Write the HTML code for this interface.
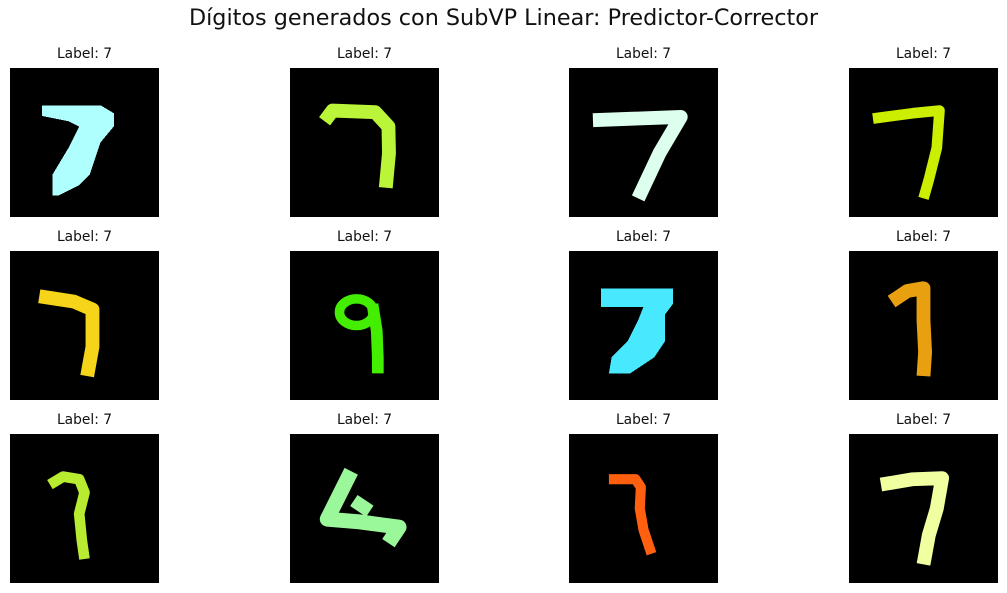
<!DOCTYPE html>
<html><head><meta charset="utf-8"><style>
html,body{margin:0;padding:0;background:#fff;}
body{width:1007px;height:593px;position:relative;overflow:hidden;font-family:"Liberation Sans","DejaVu Sans",sans-serif;}
.t{position:absolute;top:5px;left:0;width:1007px;text-align:center;font-size:22.3px;color:#111;font-family:"DejaVu Sans","Liberation Sans",sans-serif;}
.l{position:absolute;width:149px;text-align:center;font-size:13.8px;color:#111;font-family:"DejaVu Sans","Liberation Sans",sans-serif;}
svg{position:absolute;width:149px;height:149px;}
</style></head><body>
<div class="t">Dígitos generados con SubVP Linear: Predictor-Corrector</div>

<div class="l" style="left:10px;top:46px">Label: 7</div>
<div class="l" style="left:290px;top:46px">Label: 7</div>
<div class="l" style="left:569px;top:46px">Label: 7</div>
<div class="l" style="left:849px;top:46px">Label: 7</div>
<div class="l" style="left:10px;top:229px">Label: 7</div>
<div class="l" style="left:290px;top:229px">Label: 7</div>
<div class="l" style="left:569px;top:229px">Label: 7</div>
<div class="l" style="left:849px;top:229px">Label: 7</div>
<div class="l" style="left:10px;top:412px">Label: 7</div>
<div class="l" style="left:290px;top:412px">Label: 7</div>
<div class="l" style="left:569px;top:412px">Label: 7</div>
<div class="l" style="left:849px;top:412px">Label: 7</div>

<svg style="left:10px;top:68px" viewBox="0 0 28 28" shape-rendering="crispEdges"><rect width="28" height="28" fill="#000"/>
<polygon points="6,7 17,7 19.5,8.5 19.5,11 17,14 15,20 13,22 9,24 8,24 8,20 11,15 13,11 11,10 6,9" fill="#b0ffff"/></svg>

<svg style="left:290px;top:68px" viewBox="0 0 28 28"><rect width="28" height="28" fill="#000"/>
<polyline points="6.5,10 8,8 16,8.3 18.5,11 18.6,16 18,22.5" fill="none" stroke="#bbf53a" stroke-width="2.6" stroke-linejoin="round"/></svg>

<svg style="left:569px;top:68px" viewBox="0 0 28 28"><rect width="28" height="28" fill="#000"/>
<polyline points="4.5,9.8 21,9.2 17,16 13,24.5" fill="none" stroke="#ddffee" stroke-width="2.6" stroke-linejoin="round"/></svg>

<svg style="left:849px;top:68px" viewBox="0 0 28 28"><rect width="28" height="28" fill="#000"/>
<polyline points="4.5,9.5 12,8.5 17,8 16.5,15 15,21 14,24.5" fill="none" stroke="#ccee00" stroke-width="2" stroke-linejoin="round"/></svg>

<svg style="left:10px;top:251px" viewBox="0 0 28 28"><rect width="28" height="28" fill="#000"/>
<polyline points="5.5,8.5 12,9.5 15.5,11 15.5,18 14.5,23.5" fill="none" stroke="#f5d41a" stroke-width="2.6" stroke-linejoin="round"/></svg>

<svg style="left:290px;top:251px" viewBox="0 0 28 28"><rect width="28" height="28" fill="#000"/>
<ellipse cx="12.5" cy="11.5" rx="3.2" ry="2.5" fill="none" stroke="#44ee00" stroke-width="1.8"/>
<polyline points="15.5,10 16.3,15 16.5,20 16.5,23" fill="none" stroke="#44ee00" stroke-width="2.2"/></svg>

<svg style="left:569px;top:251px" viewBox="0 0 28 28" shape-rendering="crispEdges"><rect width="28" height="28" fill="#000"/>
<polygon points="6,7 19.5,7 19.5,10 18,12 18,17 16,20 11.5,23 7.5,23 8,20 11,17 13,13 14,10.5 6,10.5" fill="#48e8ff"/></svg>

<svg style="left:849px;top:251px" viewBox="0 0 28 28"><rect width="28" height="28" fill="#000"/>
<polyline points="8,9.5 11,7.5 14,7 14,13 14.3,19 14,23.5" fill="none" stroke="#e8a010" stroke-width="2.6" stroke-linejoin="round"/></svg>

<svg style="left:10px;top:434px" viewBox="0 0 28 28"><rect width="28" height="28" fill="#000"/>
<polyline points="7.5,9.5 10,8 13,8.5 14,11 13,15 13.5,20 14,23.5" fill="none" stroke="#b8ec30" stroke-width="2" stroke-linejoin="round"/></svg>

<svg style="left:290px;top:434px" viewBox="0 0 28 28"><rect width="28" height="28" fill="#000"/>
<polyline points="11.5,7 9,12 7,16 13,16.5 20.5,17.5 18.5,20.5" fill="none" stroke="#9af89a" stroke-width="2.8" stroke-linejoin="round"/>
<polyline points="12,12.5 15,14.5" stroke="#9af89a" stroke-width="2.5"/></svg>

<svg style="left:569px;top:434px" viewBox="0 0 28 28"><rect width="28" height="28" fill="#000"/>
<polyline points="7.5,8.5 12.5,8.5 13.5,10 13.3,14 14,18 15.5,22.5" fill="none" stroke="#ff6010" stroke-width="1.9" stroke-linejoin="round"/></svg>

<svg style="left:849px;top:434px" viewBox="0 0 28 28"><rect width="28" height="28" fill="#000"/>
<polyline points="6,9.5 12,8.5 17.5,8.3 16.5,14 15,19 14,24.5" fill="none" stroke="#f0ffa0" stroke-width="2.6" stroke-linejoin="round"/></svg>
</body></html>
